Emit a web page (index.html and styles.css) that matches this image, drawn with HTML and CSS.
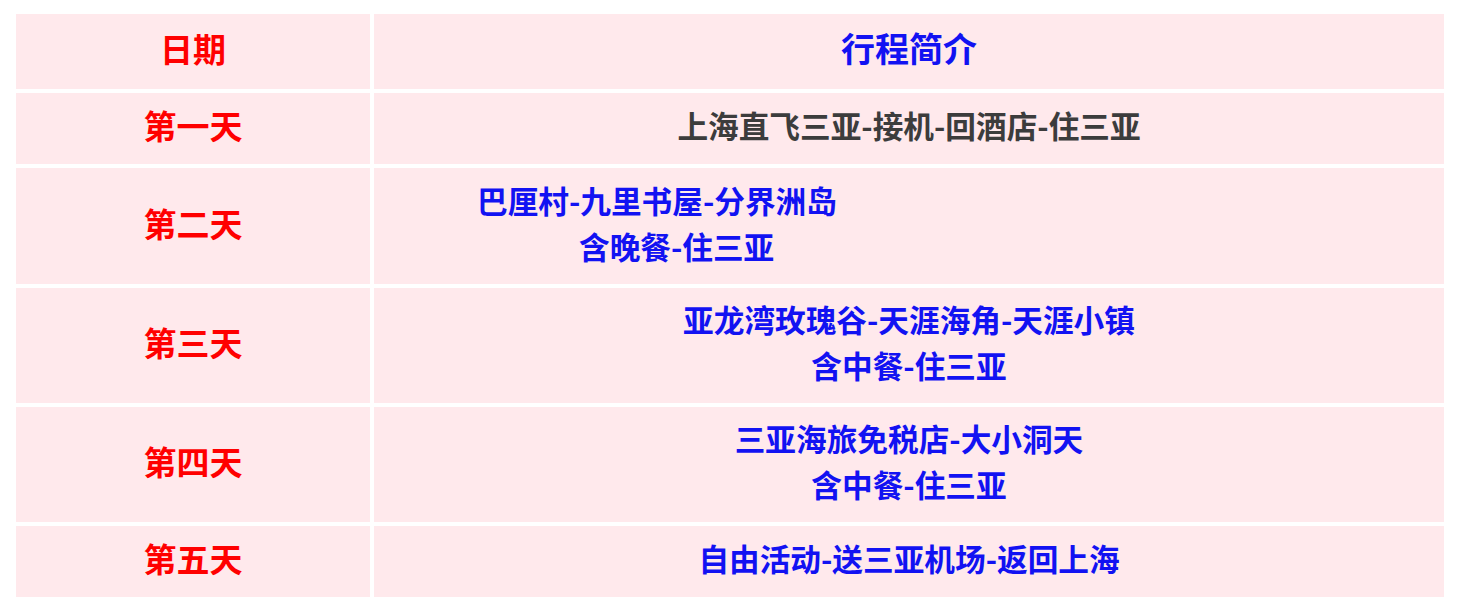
FILE: index.html
```html
<!DOCTYPE html>
<html lang="zh-CN">
<head>
<meta charset="utf-8">
<title>行程简介</title>
<link rel="stylesheet" href="styles.css">
</head>
<body>
<div class="schedule">
  <div class="cell day head">日期</div>
  <div class="cell plan head-plan">行程简介</div>

  <div class="cell day">第一天</div>
  <div class="cell plan gray">上海直飞三亚-接机-回酒店-住三亚</div>

  <div class="cell day">第二天</div>
  <div class="cell plan left">
    <div class="line first">巴厘村-九里书屋-分界洲岛</div>
    <div class="line second">含晚餐-住三亚</div>
  </div>

  <div class="cell day">第三天</div>
  <div class="cell plan">
    <div class="line">亚龙湾玫瑰谷-天涯海角-天涯小镇</div>
    <div class="line">含中餐-住三亚</div>
  </div>

  <div class="cell day">第四天</div>
  <div class="cell plan">
    <div class="line">三亚海旅免税店-大小洞天</div>
    <div class="line">含中餐-住三亚</div>
  </div>

  <div class="cell day">第五天</div>
  <div class="cell plan">自由活动-送三亚机场-返回上海</div>
</div>
</body>
</html>
```

FILE: styles.css
```css
html, body {
  margin: 0;
  padding: 0;
  background: #ffffff;
}

body {
  font-family: "Noto Sans CJK SC", "Liberation Sans", sans-serif;
  font-weight: 700;
}

.schedule {
  display: grid;
  grid-template-columns: 354px 1070px;
  grid-template-rows: 75px 71px 116px 115px 115px 71px;
  gap: 4px;
  margin: 14px 0 0 16px;
}

.cell {
  background: #ffe9ec;
  display: flex;
  flex-direction: column;
  justify-content: center;
  align-items: center;
  line-height: 46px;
  padding-bottom: 7px;
  text-align: center;
  white-space: nowrap;
}

.day {
  color: #ff0000;
  font-size: 33px;
}

.plan {
  color: #1212f2;
  font-size: 30.67px;
}

.head-plan {
  font-size: 34px;
}

.gray {
  color: #3c3c3c;
}

.left {
  align-items: flex-start;
}

.left .first {
  padding-left: 103px;
}

.left .second {
  padding-left: 205px;
}
```
